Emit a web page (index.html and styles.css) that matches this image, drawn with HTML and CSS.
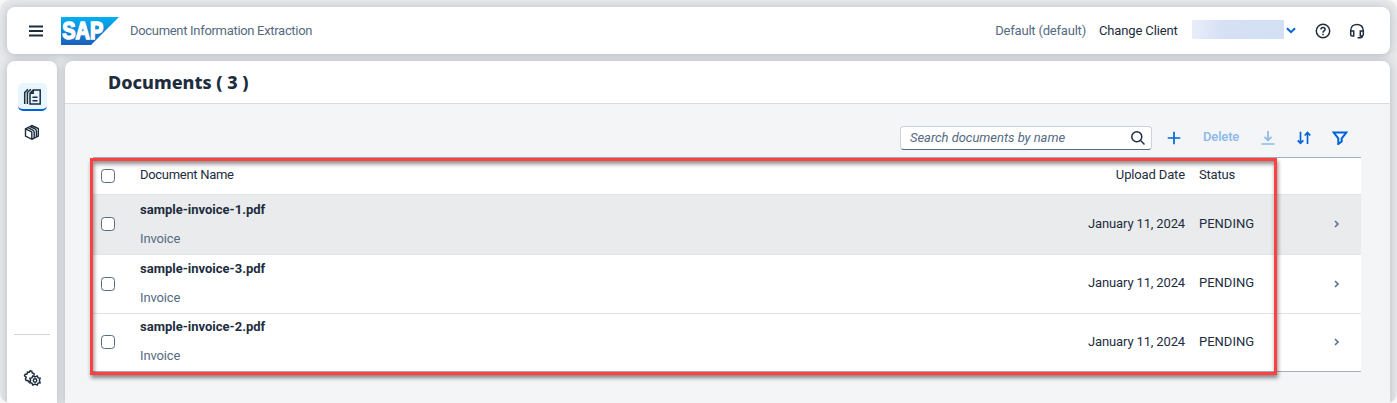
FILE: index.html
```html
<!DOCTYPE html>
<html lang="en">
<head>
<meta charset="utf-8">
<title>Document Information Extraction</title>
<link rel="stylesheet" href="styles.css">
</head>
<body>
<div class="shell">
  <header class="topbar">
    <svg class="menu" width="16" height="12" viewBox="0 0 16 12"><path d="M1 1.5h14M1 6h14M1 10.5h14"/></svg>
    <svg class="logo" width="58" height="28" viewBox="0 0 58 28">
      <defs><linearGradient id="sap" x1="0" y1="0" x2="0" y2="1"><stop offset="0" stop-color="#00b1f2"/><stop offset="1" stop-color="#1e5fbb"/></linearGradient></defs>
      <path d="M0 0H58L30 28H0Z" fill="url(#sap)"/>
      <text class="logo-text" x="1.3" y="22" textLength="41" lengthAdjust="spacingAndGlyphs">SAP</text>
    </svg>
    <span class="product">Document Information Extraction</span>
    <span class="client">Default (default)</span>
    <span class="change">Change Client</span>
    <span class="user"></span>
    <svg class="chev-down" width="10" height="7" viewBox="0 0 10 7"><path d="M1 1.2l4 4 4-4"/></svg>
    <svg class="icon help" width="16" height="16" viewBox="0 0 16 16"><circle cx="8" cy="8" r="6.7"/><path d="M5.9 6.4c0-2.7 4.2-2.6 4.2-.1C10.1 8 8 7.9 8 9.7M8 10.8v1.5"/></svg>
    <svg class="icon headset" width="16" height="16" viewBox="0 0 16 16"><path d="M1.7 12V7.5C1.7 -.6 14.3 -.6 14.3 7.5V12M1.7 8h3v5H3.2A1.5 1.5 0 0 1 1.7 11.5ZM14.3 8h-3v5h1.5a1.5 1.5 0 0 0 1.5-1.5ZM13.5 12.5c0 1.5-1 2.2-2.2 2.2H8.5"/></svg>
  </header>
  <div class="body">
    <nav class="side">
      <div class="nav active"><svg class="icon docs" width="19" height="18" viewBox="0 0 19 18"><path d="M10.2 2H17.2V16H7V5.2ZM10.2 2V5.2H7M9.5 9.2h5M9.5 12.7h5"/><path d="M7.8 1.2L4.4 4.5V16M4.9 1.2L1.7 4.5V16"/></svg></div>
      <div class="nav"><svg class="icon thin" width="16" height="17" viewBox="0 0 16 17"><path d="M1.5 4.8L8 1.5l6.3 3v7.5L8 15.3 1.5 12ZM1.5 4.8L7.8 8v7.3M3.9 3.6L8.8 6Q10.2 6.8 10.2 8.3V14M6.1 2.5L11 4.9Q12.4 5.7 12.4 7.3V13"/></svg></div>
      <div class="side-end"><svg class="icon gear" width="18" height="18" viewBox="0 0 18 18"><path d="M7.5 12.3L5.5 12.9 5 11.4 3.2 11.4 2.4 10 3.2 8.3 1.5 6.8 2.2 5.2 4 5 4.5 3 6.4 3.2 7.3 1.6 8.8 2.2 9.2 4 11 4.5 11.2 6.6"/><path d="M9.8 6.9l2.2 1.1 2.2-1.1.9 2 2 .3-.7 2.3.7 2.3-2 .3-.9 2-2.2-1.1-2.2 1.1-.9-2-2-.3.7-2.3-.7-2.3 2-.3Z"/><circle cx="12" cy="11.5" r="1.7"/></svg></div>
    </nav>
    <main class="main">
      <h1 class="title">Documents ( 3 )</h1>
      <section class="content">
        <div class="tools">
          <div class="search"><span class="placeholder">Search documents by name</span><svg class="icon mag" width="16" height="16" viewBox="0 0 16 16"><circle cx="6.8" cy="6.8" r="5"/><path d="M10.5 10.5l4 4"/></svg></div>
          <svg class="blue plus" width="14" height="14" viewBox="0 0 14 14"><path d="M7 .7v12.6M.7 7h12.6"/></svg>
          <span class="delete">Delete</span>
          <svg class="blue faded" width="14" height="14" viewBox="0 0 14 14"><path d="M7 0v9M3.5 5.8L7 9.3l3.5-3.5M.5 13h13"/></svg>
          <svg class="blue sort" width="14" height="14" viewBox="0 0 14 14"><path d="M3.5 .7v11.6M.7 9.3l2.8 3 2.8-3M10.5 13V1.5M7.7 4.5l2.8-3 2.8 3"/></svg>
          <svg class="blue filter" width="16" height="14" viewBox="0 0 16 14"><path d="M1.7 1.5h12.6L9.7 7.3v3.3L6.3 13V7.3Z"/></svg>
        </div>
        <div class="table">
          <div class="row head"><i class="box"></i><span class="name">Document Name</span><span class="date">Upload Date</span><span class="status">Status</span></div>
          <div class="row hovered"><i class="box"></i><div class="doc"><b class="file">sample-invoice-1.pdf</b><span class="type">Invoice</span></div><span class="date">January 11, 2024</span><span class="status value">PENDING</span><svg class="chev" width="6" height="8" viewBox="0 0 6 8"><path d="M1 1l3 3-3 3"/></svg></div>
          <div class="row"><i class="box"></i><div class="doc"><b class="file">sample-invoice-3.pdf</b><span class="type">Invoice</span></div><span class="date">January 11, 2024</span><span class="status value">PENDING</span><svg class="chev" width="6" height="8" viewBox="0 0 6 8"><path d="M1 1l3 3-3 3"/></svg></div>
          <div class="row last"><i class="box"></i><div class="doc"><b class="file">sample-invoice-2.pdf</b><span class="type">Invoice</span></div><span class="date">January 11, 2024</span><span class="status value">PENDING</span><svg class="chev" width="6" height="8" viewBox="0 0 6 8"><path d="M1 1l3 3-3 3"/></svg></div>
          <div class="highlight"></div>
        </div>
      </section>
    </main>
  </div>
</div>
</body>
</html>
```
FILE: styles.css
```css
* { box-sizing: border-box; }
body { margin: 0; height: 403px; overflow: hidden; background: #f7f7f7; font: 13px/18px Roboto, sans-serif; color: #1d2d3e; }
svg { display: block; flex: none; fill: none; stroke: #1d2d3e; }
.shell { height: 403px; padding: 7px 7px 0; border-radius: 10px; background: #e6e8ea; overflow: hidden; display: flex; flex-direction: column; gap: 7px; }
.topbar { height: 47px; flex: none; background: #fff; border-radius: 8px; box-shadow: 0 1px 9px rgba(34,53,72,.25); display: flex; align-items: center; padding-left: 21px; white-space: nowrap; }
.menu { stroke-width: 1.9; }
.logo { margin-left: 17px; stroke: none; }
.logo-text { font: 900 23px "Liberation Sans", sans-serif; fill: #fff; stroke: #fff; stroke-width: 1.5; }
.product { margin-left: 11px; color: #556b82; letter-spacing: -.31px; }
.client { margin-left: auto; color: #556b82; letter-spacing: -.2px; }
.change { margin-left: 13px; width: 93px; letter-spacing: -.14px; }
.user { width: 92px; height: 19px; margin-top: -3px; background: linear-gradient(90deg, #e9edf9, #d5e0f4 35%, #d3dff3); }
.chev-down { stroke: #0064d9; stroke-width: 2; margin-left: 2px; }
.icon { stroke-width: 1.5; }
.help { margin-left: 19px; }
.headset { margin: 0 25px 0 18px; }
.body { flex: 1; min-height: 0; display: flex; gap: 8px; }
.side, .main { background: #fff; border-radius: 8px 8px 0 0; box-shadow: 0 1px 9px rgba(34,53,72,.25); }
.side { width: 50px; display: flex; flex-direction: column; align-items: center; padding-top: 22px; }
.nav { width: 29px; height: 28px; display: flex; align-items: center; justify-content: center; margin-bottom: 7px; }
.active { background: #e8f6ff; border-radius: 5px; border-bottom: 2px solid #0064d9; }
.docs { margin-top: 2px; }
.thin { stroke-width: 1.4; }
.side-end { margin-top: auto; width: 36px; height: 69px; border-top: 1px solid #d5d8da; padding: 34px 0 0 9px; }
.gear { stroke-width: 1.5; }
.main { flex: 1; overflow: clip; overflow-clip-margin: 10px; }
.title { margin: 0; height: 43px; padding-left: 43px; border-bottom: 1px solid #d9dbdd; font: 800 18px/43px "Noto Sans", sans-serif; }
.content { background: #f4f5f6; height: 299px; padding: 22px 29px 0 28px; }
.tools { height: 31px; padding-right: 13px; display: flex; align-items: flex-start; justify-content: flex-end; }
.tools > svg { margin-top: 5px; }
.search { width: 252px; height: 24px; border: 1px solid #c9d3dc; border-bottom-color: #556b82; border-radius: 4px; background: #fff; display: flex; align-items: center; justify-content: space-between; padding: 0 5px 0 9px; }
.placeholder { font-style: italic; color: #556b82; letter-spacing: -.04px; }
.blue { stroke: #0064d9; stroke-width: 1.7; }
.plus { margin-left: 15px; }
.delete { width: 58px; margin: 2px 0 0 22px; color: #8bb9eb; font-weight: 500; letter-spacing: -.15px; }
.faded { stroke: #8bb9eb; }
.sort { margin-left: 22px; }
.filter { margin-left: 21px; stroke-width: 2; }
.table { position: relative; width: 1268px; border-top: 1px solid #a3afba; border-bottom: 1px solid #a3afba; background: #fff; }
.row { display: grid; grid-template-columns: 47px 1fr 120px 149px 27px; height: 59px; align-items: center; border-top: 1px solid #e1e3e4; }
.head { height: 36px; border: 0; letter-spacing: -.2px; }
.hovered { height: 60px; background: #eaebec; }
.last { height: 58px; }
.box { width: 14px; height: 14px; margin: 0 0 1px 8px; border: 1px solid #556b82; border-radius: 3.5px; background: #fff; }
.doc { display: flex; flex-direction: column; gap: 11px; margin-top: -2px; }
.hovered .doc { margin-top: 0; }
.file { font-weight: 700; }
.type { color: #556b82; letter-spacing: -.15px; }
.date { text-align: right; padding-right: 12px; margin: -2px -12px 0 0; letter-spacing: -.14px; }
.status { padding-left: 14px; margin-top: -2px; }
.head .name { margin-top: -2px; letter-spacing: -.3px; }
.chev { stroke: #5d7593; stroke-width: 1.7; margin-top: -1px; }
.highlight { position: absolute; left: -3px; top: 0; width: 1187px; height: 217px; border: 3px solid #ff4141; box-shadow: 1px 3px 4px rgba(0,0,0,.45), inset 1px 3px 4px rgba(0,0,0,.45); }
```
